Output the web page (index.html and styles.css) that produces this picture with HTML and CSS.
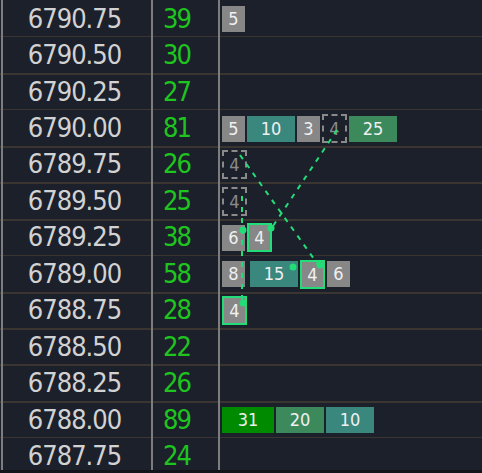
FILE: index.html
```html
<!DOCTYPE html>
<html lang="en">
<head>
  <meta charset="UTF-8" />
  <title>Price Ladder</title>
  <meta name="viewport" content="width=device-width, initial-scale=1.0" />
  <link rel="stylesheet" href="styles.css">
</head>
<body>
  <div class="ladder">
    <div class="row">
      <div class="price">6790.75</div>
      <div class="vol">39</div>
      <div class="orders"><span class="box gray">5</span></div>
    </div>
    <div class="row">
      <div class="price">6790.50</div>
      <div class="vol">30</div>
      <div class="orders"></div>
    </div>
    <div class="row">
      <div class="price">6790.25</div>
      <div class="vol">27</div>
      <div class="orders"></div>
    </div>
    <div class="row">
      <div class="price">6790.00</div>
      <div class="vol">81</div>
      <div class="orders">
        <span class="box gray">5</span>
        <span class="box teal wide">10</span>
        <span class="box gray">3</span>
        <span class="box ghost">4</span>
        <span class="box green wide">25</span>
      </div>
    </div>
    <div class="row">
      <div class="price">6789.75</div>
      <div class="vol">26</div>
      <div class="orders"><span class="box ghost">4</span></div>
    </div>
    <div class="row">
      <div class="price">6789.50</div>
      <div class="vol">25</div>
      <div class="orders"><span class="box ghost">4</span></div>
    </div>
    <div class="row">
      <div class="price">6789.25</div>
      <div class="vol">38</div>
      <div class="orders">
        <span class="box gray">6</span>
        <span class="box gray hit">4</span>
      </div>
    </div>
    <div class="row">
      <div class="price">6789.00</div>
      <div class="vol">58</div>
      <div class="orders">
        <span class="box gray">8</span>
        <span class="box teal wide shifted">15</span>
        <span class="box gray hit">4</span>
        <span class="box gray">6</span>
      </div>
    </div>
    <div class="row">
      <div class="price">6788.75</div>
      <div class="vol">28</div>
      <div class="orders"><span class="box gray hit">4</span></div>
    </div>
    <div class="row">
      <div class="price">6788.50</div>
      <div class="vol">22</div>
      <div class="orders"></div>
    </div>
    <div class="row">
      <div class="price">6788.25</div>
      <div class="vol">26</div>
      <div class="orders"></div>
    </div>
    <div class="row">
      <div class="price">6788.00</div>
      <div class="vol">89</div>
      <div class="orders">
        <span class="box lime wider">31</span>
        <span class="box green wide">20</span>
        <span class="box teal wide">10</span>
      </div>
    </div>
    <div class="row">
      <div class="price">6787.75</div>
      <div class="vol">24</div>
      <div class="orders"></div>
    </div>

    <!-- order modification links -->
    <svg class="links" width="482" height="470" viewBox="0 0 482 470">
      <line x1="337" y1="130" x2="271" y2="229" />
      <line x1="240" y1="155" x2="319" y2="266" />
      <line x1="242" y1="196" x2="242" y2="303" />
      <circle cx="271" cy="228" r="3.5" />
      <circle cx="320" cy="265" r="3.5" />
      <circle cx="293" cy="267" r="3.5" />
      <circle cx="243" cy="230" r="3.5" />
      <circle cx="243" cy="303" r="3.5" />
    </svg>
  </div>
</body>
</html>
```

FILE: styles.css
```css
:root {
  --bg: #1c202b;
  --sep: #3a3531;
  --rule: #7d7d7d;
  --price: #d2d2d2;
  --vol: #1fc41f;
  --accent: #22dd77;
}

body {
  margin: 0;
  background-color: #13151b;
  font-family: "DejaVu Sans Condensed", "DejaVu Sans", sans-serif;
  font-stretch: condensed;
}

.ladder {
  position: relative;
  height: 470px;
  overflow: hidden;
  background-color: var(--bg);
}

.row {
  display: grid;
  grid-template-columns: 150px 67px 1fr;
  height: 36.45px;
  padding-left: 1px;
}

.row + .row {
  background-image: linear-gradient(to bottom, var(--sep) 1.5px, transparent 1.5px);
}

.price,
.vol,
.orders {
  border-left: 2px solid var(--rule);
  display: flex;
  align-items: center;
}

.price {
  justify-content: center;
  color: var(--price);
  font-size: 27px;
  letter-spacing: -1px;
  padding-right: 5px;
}

.vol {
  color: var(--vol);
  font-size: 27px;
  letter-spacing: -2px;
  padding-left: 10px;
}

.orders {
  gap: 2px;
  padding-left: 2px;
  padding-top: 2px;
  box-sizing: border-box;
}

.box {
  box-sizing: border-box;
  width: 23px;
  height: 26px;
  line-height: 26px;
  text-align: center;
  font-size: 18px;
  color: #f0f0f0;
}

.wide { width: 48px; }
.wider { width: 52px; }
.shifted { margin-left: 3px; }

.gray { background-color: #878787; }
.teal { background-color: #3a877e; }
.green { background-color: #3c8a5c; }
.lime { background-color: #008a00; }

.ghost {
  width: 25px;
  height: 29px;
  line-height: 25px;
  border: 2px dashed #8a8a8a;
  color: #8a8a8a;
}

.hit {
  width: 25px;
  height: 29px;
  line-height: 25px;
  border: 2px solid var(--accent);
}

.links {
  position: absolute;
  top: 0;
  left: 0;
  pointer-events: none;
}

.links line {
  stroke: var(--accent);
  stroke-width: 2;
  stroke-dasharray: 5 6;
}

.links circle {
  fill: var(--accent);
}
```
